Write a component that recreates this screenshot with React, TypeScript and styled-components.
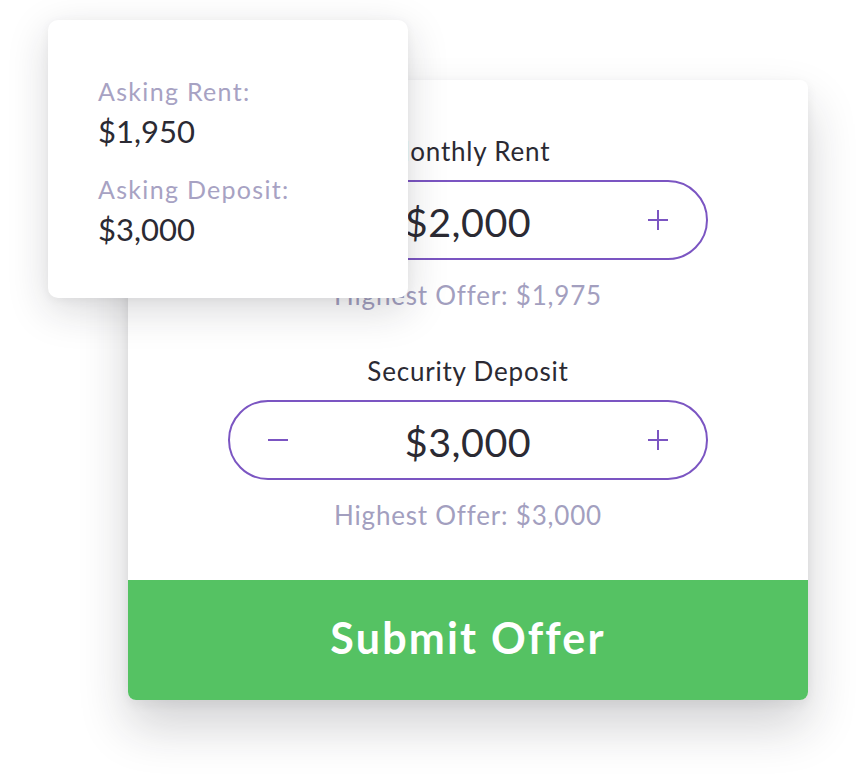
import { createGlobalStyle, styled } from 'styled-components'

const GlobalStyle = createGlobalStyle`
  body {
    margin: 0;
    background: #ffffff;
    font-family: 'Proxima Nova', Lato, 'Liberation Sans', sans-serif;
    color: #2b2a33;
  }
`

const Canvas = styled.div`
  position: relative;
  width: 856px;
  height: 776px;
  padding: 80px 0 0 128px;
  box-sizing: border-box;
`

const OfferCard = styled.div`
  width: 680px;
  background: white;
  border-radius: 8px;
  overflow: hidden;
  box-shadow: 0 26px 50px rgba(30, 30, 40, 0.2), 0 4px 12px rgba(30, 30, 40, 0.06);
`

const Fields = styled.div`
  display: flex;
  flex-direction: column;
  align-items: center;
  gap: 48px;
  padding: 56px 0 52px;
`

const Field = styled.div`
  display: flex;
  flex-direction: column;
  align-items: center;
`

const FieldLabel = styled.div`
  font-size: 26px;
  line-height: 30px;
  letter-spacing: 0.8px;
  margin-bottom: 14px;
  color: #2b2a33;
`

const Stepper = styled.div`
  width: 480px;
  height: 80px;
  box-sizing: border-box;
  border: 2px solid #7b55c2;
  border-radius: 40px;
  display: flex;
  align-items: center;
  justify-content: space-between;
  padding: 0 38px;
`

const StepButton = styled.button`
  width: 20px;
  height: 20px;
  padding: 0;
  border: none;
  background: none;
  color: #7b55c2;
  display: flex;
  align-items: center;
  justify-content: center;
  cursor: pointer;
`

const Value = styled.div`
  font-size: 39.5px;
  line-height: 44px;
  letter-spacing: 0.5px;
  margin-top: 4px;
  color: #2b2a33;
`

const HighestOffer = styled.div`
  margin-top: 22px;
  font-size: 26px;
  line-height: 26px;
  letter-spacing: 0.8px;
  color: #a39fbf;
`

const SubmitButton = styled.button`
  display: block;
  width: 100%;
  height: 120px;
  padding: 0 0 6px;
  border: none;
  background: #55c263;
  color: white;
  font-family: inherit;
  font-weight: 700;
  font-size: 43px;
  letter-spacing: 2.2px;
  cursor: pointer;
`

const AskingCard = styled.div`
  position: absolute;
  left: 48px;
  top: 20px;
  width: 360px;
  height: 278px;
  box-sizing: border-box;
  padding: 57px 50px 0;
  background: white;
  border-radius: 10px;
  box-shadow: 0 12px 40px rgba(30, 30, 40, 0.17), 0 2px 10px rgba(30, 30, 40, 0.05);
`

const AskingLabel = styled.div<{ spaced?: boolean }>`
  font-size: 25px;
  line-height: 28px;
  letter-spacing: 1.3px;
  color: #a7a2c3;
  margin-top: ${(p) => (p.spaced ? '26px' : '0')};
`

const AskingValue = styled.div`
  font-size: 31px;
  line-height: 36px;
  margin-top: 8px;
  color: #2b2a33;
`

const Minus = () => (
  <svg width="20" height="20" viewBox="0 0 20 20">
    <path d="M0 10h20" stroke="currentColor" strokeWidth="2" />
  </svg>
)

const Plus = () => (
  <svg width="20" height="20" viewBox="0 0 20 20">
    <path d="M0 10h20M10 0v20" stroke="currentColor" strokeWidth="2" />
  </svg>
)

const fields = [
  { label: 'Monthly Rent', value: '$2,000', highest: '$1,975' },
  { label: 'Security Deposit', value: '$3,000', highest: '$3,000' },
]

export default function App() {
  return (
    <>
      <GlobalStyle />
      <Canvas>
        <OfferCard>
          <Fields>
            {fields.map((f) => (
              <Field key={f.label}>
                <FieldLabel>{f.label}</FieldLabel>
                <Stepper>
                  <StepButton aria-label="decrease">
                    <Minus />
                  </StepButton>
                  <Value>{f.value}</Value>
                  <StepButton aria-label="increase">
                    <Plus />
                  </StepButton>
                </Stepper>
                <HighestOffer>Highest Offer: {f.highest}</HighestOffer>
              </Field>
            ))}
          </Fields>
          <SubmitButton>Submit Offer</SubmitButton>
        </OfferCard>
        <AskingCard>
          <AskingLabel>Asking Rent:</AskingLabel>
          <AskingValue>$1,950</AskingValue>
          <AskingLabel spaced>Asking Deposit:</AskingLabel>
          <AskingValue>$3,000</AskingValue>
        </AskingCard>
      </Canvas>
    </>
  )
}
